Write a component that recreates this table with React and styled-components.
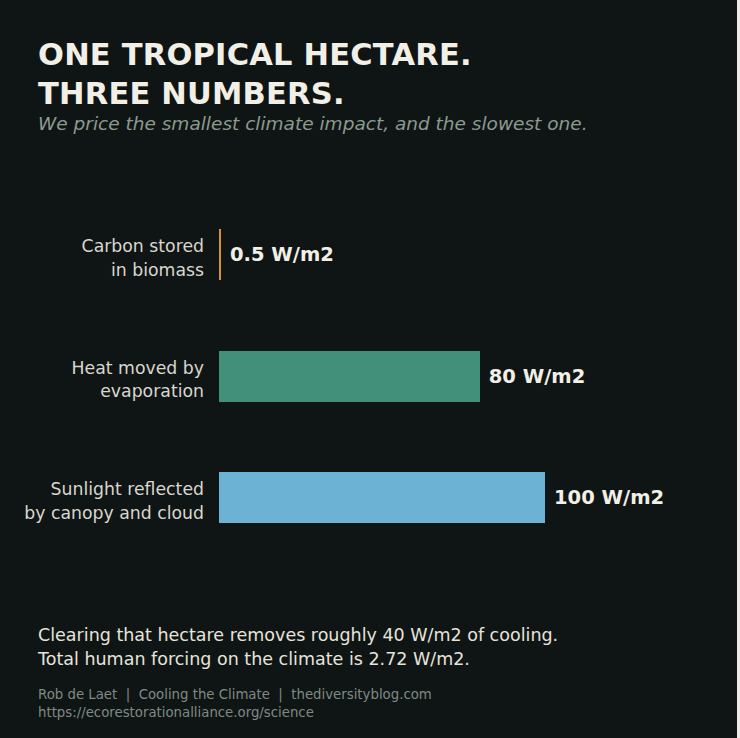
import React from "react";
import styled, { createGlobalStyle } from "styled-components";

const GlobalStyle = createGlobalStyle`
  html, body { margin: 0; padding: 0; background: #ececea; }
  body { font-family: "DejaVu Sans", "Liberation Sans", sans-serif; }
`;

const Card = styled.div`
  width: 737px;
  height: 738px;
  background: #0f1514;
  display: flex;
  flex-direction: column;
  box-sizing: border-box;
  overflow: hidden;
`;

const Header = styled.header`
  padding: 35px 38px 0;
`;

const Title = styled.h1`
  margin: 0;
  font-size: 30.5px;
  line-height: 39px;
  font-weight: 700;
  color: #f2efe6;
  letter-spacing: 0.2px;
`;

const Subtitle = styled.p`
  margin: 0;
  font-size: 18.5px;
  line-height: 22px;
  font-style: italic;
  color: #8c9a90;
`;

const Chart = styled.section`
  margin-top: 92.4px;
  display: flex;
  flex-direction: column;
  gap: 70.5px;
`;

const Row = styled.div`
  display: grid;
  grid-template-columns: 204px 1fr;
  column-gap: 15px;
  align-items: center;
  height: 51px;
`;

const Label = styled.div`
  text-align: right;
  font-size: 17.3px;
  line-height: 23.5px;
  color: #d9d7cf;
  padding-top: 8px;
  white-space: nowrap;
`;

const BarCell = styled.div`
  display: flex;
  align-items: center;
  gap: 9px;
  height: 100%;
`;

const Bar = styled.div`
  height: 51px;
  background: ${(p) => p.$color};
  flex: none;
`;

const Value = styled.span`
  font-size: 19.5px;
  font-weight: 700;
  color: #f2efe6;
  white-space: nowrap;
`;

const Footer = styled.footer`
  margin-top: 101.6px;
  padding: 0 38px;
`;

const Note = styled.p`
  margin: 0;
  font-size: 17.5px;
  line-height: 24.3px;
  color: #e6e4dc;
`;

const Credits = styled.p`
  margin: 14.5px 0 0;
  font-size: 13.3px;
  line-height: 18px;
  color: #7f8a84;
  white-space: pre;
`;

const SCALE = 3.26;

const data = [
  { label: ["Carbon stored", "in biomass"], value: 0.5, color: "#d4923c" },
  { label: ["Heat moved by", "evaporation"], value: 80, color: "#42907a" },
  { label: ["Sunlight reflected", "by canopy and cloud"], value: 100, color: "#6cb2d4" },
];

export default function App() {
  return (
    <>
      <GlobalStyle />
      <Card>
        <Header>
          <Title>
            ONE TROPICAL HECTARE.
            <br />
            THREE NUMBERS.
          </Title>
          <Subtitle>We price the smallest climate impact, and the slowest one.</Subtitle>
        </Header>
        <Chart>
          {data.map((d) => (
            <Row key={d.value}>
              <Label>
                {d.label[0]}
                <br />
                {d.label[1]}
              </Label>
              <BarCell>
                <Bar $color={d.color} style={{ width: Math.max(2, d.value * SCALE) }} />
                <Value>{d.value} W/m2</Value>
              </BarCell>
            </Row>
          ))}
        </Chart>
        <Footer>
          <Note>
            Clearing that hectare removes roughly 40 W/m2 of cooling.
            <br />
            Total human forcing on the climate is 2.72 W/m2.
          </Note>
          <Credits>
            {"Rob de Laet  |  Cooling the Climate  |  thediversityblog.com\nhttps://ecorestorationalliance.org/science"}
          </Credits>
        </Footer>
      </Card>
    </>
  );
}
